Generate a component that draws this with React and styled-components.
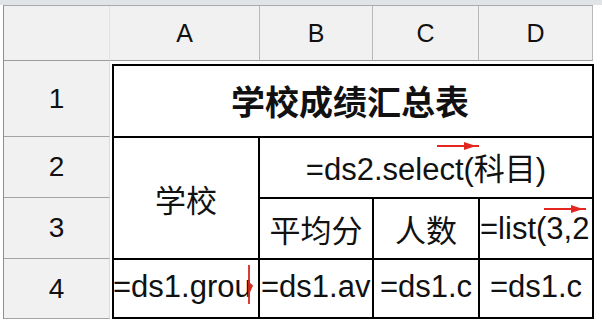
import React from 'react';
import styled, { createGlobalStyle } from 'styled-components';

const GlobalStyle = createGlobalStyle`
  html, body {
    margin: 0;
    padding: 0;
    background: #ffffff;
  }
  * {
    box-sizing: border-box;
  }
`;

const Page = styled.div`
  width: 602px;
  height: 330px;
  background: #ffffff;
  border-top: 5px solid #e1e4e7;
  overflow: hidden;
`;

const Sheet = styled.div`
  display: grid;
  grid-template-columns: 106px 150px 113px 106px 114px;
  grid-template-rows: 55px 76px 61px 61px 60px;
  margin-left: 3px;
  width: 590px;
  border-top: 1px solid #a9abad;
  border-left: 1px solid #8f8f8f;
  font-family: "Liberation Sans", "Noto Sans CJK SC", sans-serif;
  color: #111;
`;

const ColHead = styled.div`
  display: flex;
  align-items: center;
  justify-content: center;
  background: #f1f1f1;
  border-right: 1px solid ${(p) => (p.$corner ? '#e2e2e2' : '#b9b9b9')};
  border-bottom: 1px solid #9c9c9c;
  font-size: 25px;
  padding-top: 1px;
`;

const RowHead = styled.div`
  display: flex;
  align-items: center;
  justify-content: center;
  background: #f1f1f1;
  border-right: 1px solid #dcdcdc;
  border-bottom: 1px solid #a4a4a4;
  font-size: 28px;
  grid-column: 1;
  grid-row: ${(p) => p.$row};
`;

const Table = styled.div`
  grid-column: 2 / 6;
  grid-row: 2 / 6;
  align-self: start;
  justify-self: start;
  margin: 3px 0 0 2px;
  width: 482px;
  height: 255px;
  display: grid;
  grid-template-columns: 144px 112px 104px 112px;
  grid-template-rows: 70px 59px 59px 57px;
  gap: 2px;
  padding: 2px;
  background: #000;
`;

const Cell = styled.div`
  position: relative;
  display: flex;
  align-items: center;
  justify-content: ${(p) => (p.$align === 'left' ? 'flex-start' : 'center')};
  background: #fff;
  overflow: hidden;
  white-space: nowrap;
  font-size: 31px;
  line-height: 1;
  padding-bottom: ${(p) => (p.$low ? '4px' : '0')};
  grid-column: ${(p) => p.$col || 'auto'};
  grid-row: ${(p) => p.$row || 'auto'};
`;

const Title = styled.span`
  font-family: "Noto Sans CJK SC", sans-serif;
  font-weight: 700;
  font-size: 34px;
  margin-right: 6px;
`;

const Cjk = styled.span`
  font-family: "Noto Sans CJK SC", sans-serif;
  font-size: 31px;
`;

const Shifted = styled.span`
  margin-left: ${(p) => p.$shift || 0}px;
`;

const Mark = styled.svg`
  position: absolute;
  left: ${(p) => p.$x}px;
  top: ${(p) => p.$y}px;
  overflow: visible;
`;

const RightArrow = ({ x, y, w }) => (
  <Mark $x={x} $y={y} width={w} height="8" viewBox={`0 0 ${w} 8`}>
    <line x1="0" y1="4" x2={w} y2="4" stroke="#e3261f" strokeWidth="1.8" />
    <polygon points={`${w - 15},0 ${w - 3},4 ${w - 15},8`} fill="#e3261f" />
  </Mark>
);

const DownArrow = ({ x, y, h }) => (
  <Mark $x={x} $y={y} width="8" height={h} viewBox={`0 0 8 ${h}`}>
    <line x1="4" y1="0" x2="4" y2={h} stroke="#d42a22" strokeWidth="1.8" />
    <polygon points={`3.5,${h / 2 - 3} 8,${h / 2 + 1} 4.5,${h / 2 + 9}`} fill="#d42a22" />
  </Mark>
);

const App = () => {
  return (
    <>
      <GlobalStyle />
      <Page>
        <Sheet>
          <ColHead $corner />
          <ColHead>A</ColHead>
          <ColHead>B</ColHead>
          <ColHead>C</ColHead>
          <ColHead>D</ColHead>

          <RowHead $row={2}>1</RowHead>
          <RowHead $row={3}>2</RowHead>
          <RowHead $row={4}>3</RowHead>
          <RowHead $row={5}>4</RowHead>

          <Table>
            <Cell $col="1 / 5" $row="1">
              <Title>学校成绩汇总表</Title>
            </Cell>

            <Cell $col="1" $row="2 / 4">
              <Cjk>学校</Cjk>
            </Cell>
            <Cell $col="2 / 5" $row="2">
              <span>
                =ds2.select(<Cjk>科目</Cjk>)
              </span>
              <RightArrow x={177} y={4} w={42} />
            </Cell>

            <Cell $col="2" $row="3">
              <Cjk>平均分</Cjk>
            </Cell>
            <Cell $col="3" $row="3">
              <Cjk>人数</Cjk>
            </Cell>
            <Cell $col="4" $row="3" $align="left">
              <Shifted $shift={0}>=list(3,2</Shifted>
              <RightArrow x={64} y={6} w={42} />
            </Cell>

            <Cell $col="1" $row="4" $align="left" $low>
              <Shifted $shift={-1}>=ds1.grou</Shifted>
              <DownArrow x={131} y={5} h={39} />
            </Cell>
            <Cell $col="2" $row="4" $align="left" $low>
              <Shifted $shift={1}>=ds1.av</Shifted>
            </Cell>
            <Cell $col="3" $row="4" $low>
              =ds1.c
            </Cell>
            <Cell $col="4" $row="4" $low>
              =ds1.c
            </Cell>
          </Table>
        </Sheet>
      </Page>
    </>
  );
};

export default App;
